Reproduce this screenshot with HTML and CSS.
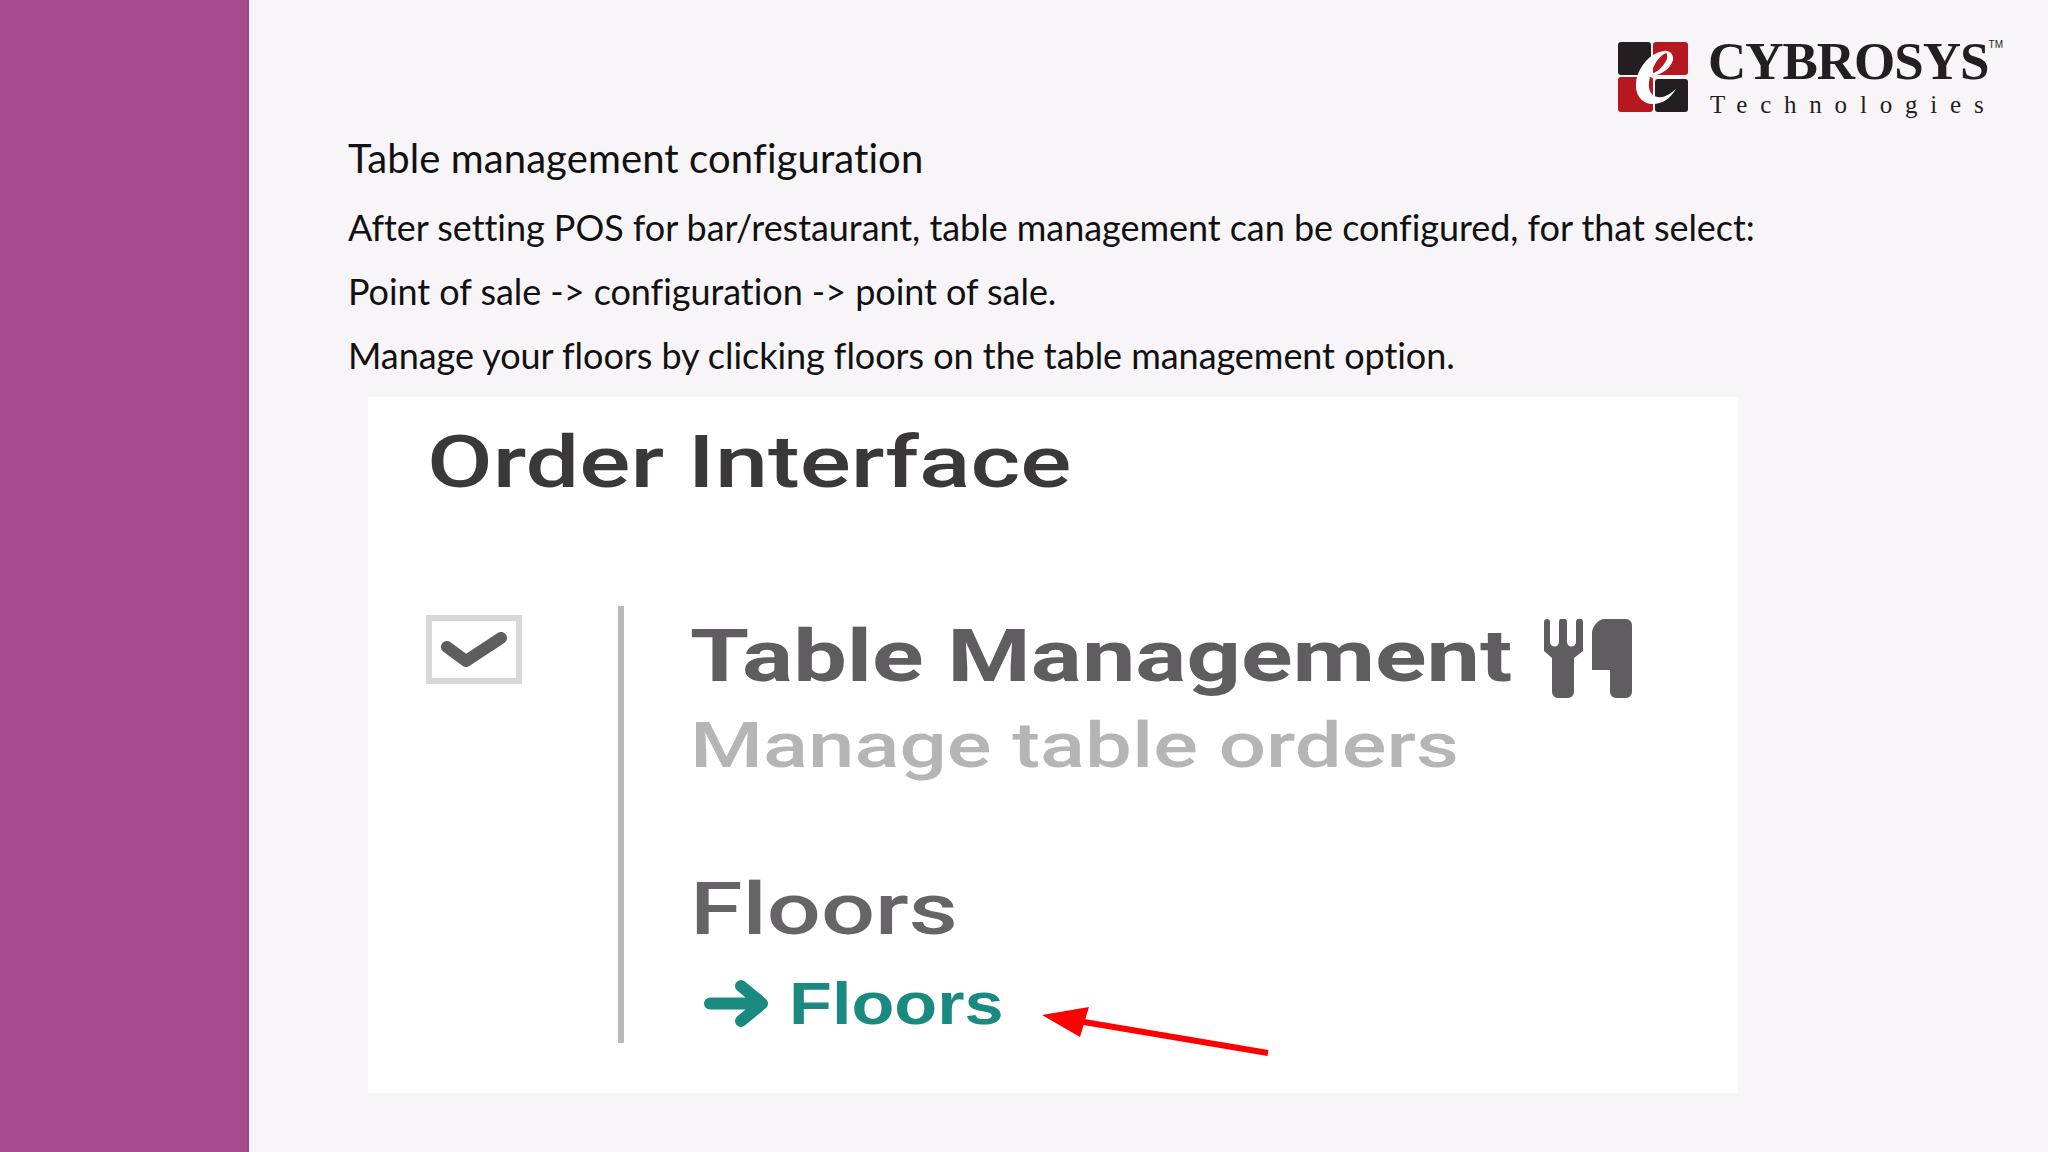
FILE: index.html
```html
<!DOCTYPE html>
<html lang="en">
<head>
    <meta charset="UTF-8">
    <title>Table management configuration</title>
    <link rel="stylesheet" href="styles.css">
</head>
<body>
    <div class="slide">
        <div class="sidebar"></div>
        <div class="main">
            <div class="logo">
                <svg class="logo-mark" viewBox="0 0 70 70">
                    <rect x="0" y="0" width="33" height="33" rx="3" fill="#231f20"/>
                    <rect x="35" y="0" width="35" height="33" rx="3" fill="#b5191f"/>
                    <rect x="0" y="35" width="35" height="35" rx="3" fill="#b5191f"/>
                    <rect x="37" y="37" width="33" height="33" rx="3" fill="#231f20"/>
                    <path d="M47 9C33 10 20 24 18 41C17 54 25 62 35 62C44 62 52 57 58 47C51 53 45 56 40 55C33 54 30 48 31 40C33 27 39 15 48 11Z" fill="#fff"/>
                    <path d="M32 34C41 34 52 28 55 18C56 12 51 8 46 9C50 11 50 16 48 19C45 24 40 31 32 32Z" fill="#fff"/>
                </svg>
                <div class="logo-text">
                    <div class="logo-name">CYBROSYS</div>
                    <div class="logo-sub">Technologies</div>
                </div>
                <div class="logo-tm">TM</div>
            </div>
            <div class="content">
                <p class="line first">Table management configuration</p>
                <p class="line">After setting POS for bar/restaurant, table management can be configured, for that select:</p>
                <p class="line">Point of sale -&gt; configuration -&gt; point of sale.</p>
                <p class="line">Manage your floors by clicking floors on the table management option.</p>
                <div class="shot">
                    <h2 class="shot-title"><span class="wide">Order Interface</span></h2>
                    <div class="setting">
                        <div class="checkbox">
                            <svg viewBox="0 0 66 36" width="66" height="36">
                                <path d="M6 15L25 29L60 6" fill="none" stroke="#5f5d60" stroke-width="12" stroke-linecap="round" stroke-linejoin="round"/>
                            </svg>
                        </div>
                        <div class="setting-body">
                            <div class="setting-head">
                                <span class="setting-name wide">Table Management</span>
                                <svg class="cutlery" viewBox="0 0 88 80" width="88" height="80">
                                    <path d="M0 3a3 3 0 0 1 6 0V23a3 3 0 0 0 9 0V3a4 4 0 0 1 8 0V23a3 3 0 0 0 9 0V3a3 3 0 0 1 7 0V32L30 39V73a6 6 0 0 1-6 6H14a6 6 0 0 1-6-6V39L0 32Z" fill="#5f5d60"/>
                                    <path d="M61 0H82a6 6 0 0 1 6 6V73a6 6 0 0 1-6 6H72a6 6 0 0 1-6-6V51H48V14C48 8 54 0 61 0Z" fill="#5f5d60"/>
                                </svg>
                            </div>
                            <div class="setting-desc"><span class="wide">Manage table orders</span></div>
                            <div class="setting-sub"><span class="wide">Floors</span></div>
                            <div class="setting-link">
                                <svg viewBox="0 0 64 47" width="64" height="47">
                                    <path d="M6 23.5H55M37 6L58 23.5L37 41" fill="none" stroke="#1a8a80" stroke-width="12" stroke-linecap="round" stroke-linejoin="round"/>
                                </svg>
                                <span class="wide-link">Floors</span>
                            </div>
                        </div>
                    </div>
                    <svg class="red-arrow" viewBox="0 0 230 56" width="230" height="56">
                        <path d="M2 15L49 7L40 37Z" fill="#f00"/>
                        <path d="M44 22L228 53" stroke="#f00" stroke-width="6" fill="none"/>
                    </svg>
                </div>
            </div>
        </div>
    </div>
</body>
</html>
```
FILE: styles.css
```css
body {
    margin: 0;
    padding: 0;
    font-family: "Lato", "Liberation Sans", sans-serif;
    font-variant-ligatures: none;
    background-color: #f7f5f7;
}
.slide {
    display: flex;
    width: 2048px;
    height: 1152px;
    overflow: hidden;
}
.sidebar {
    box-sizing: border-box;
    width: 249px;
    flex-shrink: 0;
    background-color: #a84c8f;
    border-right: 2px solid #9a4684;
}
.main {
    flex: 1;
}
.logo {
    display: flex;
    justify-content: flex-end;
    padding: 42px 45px 0 0;
    height: 84px;
}
.logo-mark {
    width: 70px;
    height: 70px;
    margin-right: 20px;
}
.logo-text {
    font-family: "Liberation Serif", serif;
    color: #231f20;
    margin-top: -1px;
}
.logo-name {
    font-size: 53px;
    font-weight: bold;
    letter-spacing: -1px;
    line-height: 40px;
}
/* sits over the corner of the wordmark */
.logo-tm {
    font-family: "Liberation Sans", sans-serif;
    font-size: 10px;
    line-height: 12px;
    margin: -3px 0 0 0;
    color: #231f20;
}
.logo-sub {
    font-size: 25px;
    letter-spacing: 12.8px;
    line-height: 30px;
    margin: 9px -12px 0 2px;
    white-space: nowrap;
}
.content {
    padding-left: 99px;
}
.line {
    margin: 0;
    font-size: 36px;
    letter-spacing: -0.05px;
    line-height: 64px;
    color: #111;
    white-space: nowrap;
}
.line.first {
    font-size: 40px;
    letter-spacing: 0.1px;
    margin-bottom: 5px;
}
.shot {
    position: relative;
    width: 1370px;
    height: 696px;
    margin: 10px 0 0 20px;
    background-color: #fff;
    font-family: "Roboto", sans-serif;
}
/* the screenshot in the slide is stretched sideways */
.wide {
    display: inline-block;
    transform: scaleX(1.325);
    transform-origin: left center;
    white-space: nowrap;
}
.shot-title {
    margin: 0;
    padding: 26px 0 0 59px;
    font-size: 72px;
    font-weight: 500;
    line-height: 80px;
    color: #3a3839;
}
.setting {
    display: flex;
    margin: 103px 0 0 58px;
}
.checkbox {
    display: flex;
    align-items: center;
    justify-content: center;
    box-sizing: border-box;
    width: 96px;
    height: 69px;
    border: 6px solid #d8d8d8;
    margin-top: 9px;
}
.setting-body {
    margin-left: 96px;
    border-left: 6px solid #b9b9bb;
    padding-left: 66px;
    height: 437px;
}
.setting-head {
    display: flex;
    align-items: center;
    height: 100px;
}
.setting-name {
    font-size: 72px;
    font-weight: 700;
    color: #5f5d60;
}
.cutlery {
    margin: 5px 0 0 233px;
}
.setting-desc {
    margin-top: 2px;
    font-size: 63px;
    font-weight: 500;
    line-height: 76px;
    color: #b5b5b7;
}
.setting-sub {
    margin-top: 84px;
    font-size: 72px;
    font-weight: 500;
    line-height: 84px;
    color: #666467;
}
.setting-link {
    display: flex;
    align-items: center;
    gap: 21px;
    margin: 17px 0 0 14px;
    font-family: "Liberation Sans", sans-serif;
    font-size: 60px;
    font-weight: bold;
    color: #1a8a80;
}
.wide-link {
    display: inline-block;
    transform: scaleX(1.17);
    transform-origin: left center;
}
.red-arrow {
    position: absolute;
    left: 672px;
    top: 603px;
    overflow: visible;
}
```
